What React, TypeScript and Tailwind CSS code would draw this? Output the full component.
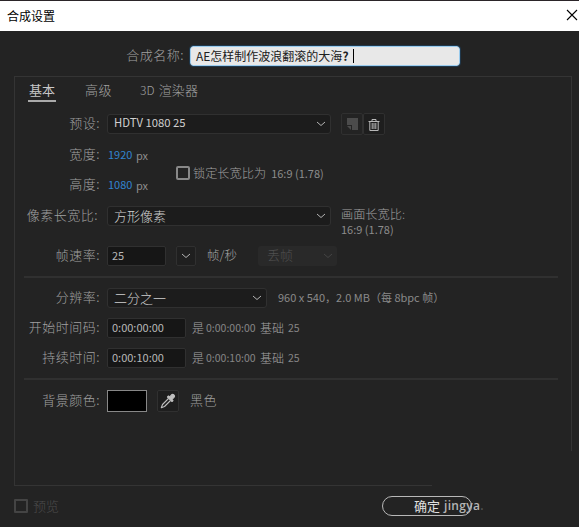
import type { ReactNode } from "react";

function Label({ children, className = "pr-px" }: { children: ReactNode; className?: string }) {
  return (
    <div className={`w-[86px] shrink-0 pb-[3px] whitespace-nowrap text-right text-[13px] tracking-[0.5px] text-[#a0a0a0] ${className}`}>
      {children}
    </div>
  );
}

function Chevron({ className = "text-[#b4b4b4]" }: { className?: string }) {
  return (
    <svg viewBox="0 0 10 6" className={`h-[6px] w-[10px] shrink-0 ${className}`} fill="none" stroke="currentColor" strokeWidth="1">
      <path d="M1 1 5 4.5 9 1" />
    </svg>
  );
}

function Select({ children, className = "" }: { children: ReactNode; className?: string }) {
  return (
    <div className={`flex h-5 shrink-0 items-center justify-between rounded-[3px] border border-[#303030] bg-[#1c1c1c] pr-1 pl-1.5 text-[#d0d0d0] ${className}`}>
      <span className="pb-[2px]">{children}</span>
      <Chevron />
    </div>
  );
}

function Field({ children, className = "" }: { children: ReactNode; className?: string }) {
  return (
    <div className={`flex h-5 shrink-0 items-center rounded-[2px] border border-[#303030] bg-[#161616] pb-px pl-1 text-[11px] font-normal text-[#b8b8b8] ${className}`}>
      {children}
    </div>
  );
}

function Row({ children, className = "" }: { children: ReactNode; className?: string }) {
  return <div className={`flex h-5 items-center ${className}`}>{children}</div>;
}

function TimeRow({ label, value, className }: { label: string; value: string; className: string }) {
  return (
    <Row className={className}>
      <Label>{label}</Label>
      <Field className="ml-1.5 w-[79px]">{value}</Field>
      <span className="ml-1.5 w-[14px] pb-px text-[12px] text-[#a4a4a4]">是</span>
      <span className="w-[54px] text-[10.5px] font-normal text-[#868686]">{value}</span>
      <span className="w-[28px] pb-px text-[12px] text-[#a4a4a4]">基础</span>
      <span className="text-[10.5px] font-normal text-[#868686]">25</span>
    </Row>
  );
}

export default function App() {
  return (
    <div className="relative flex h-[527px] w-[579px] flex-col overflow-hidden bg-[#232323] font-['Noto_Sans_CJK_SC',sans-serif] leading-none font-light whitespace-nowrap">
      <header className="flex h-[31px] shrink-0 items-center justify-between border-t border-[#2b2529] bg-white pl-[7px] text-[12px] font-normal text-black">
        <span className="pb-px">合成设置</span>
        <svg viewBox="0 0 12 12" className="mr-[1px] mb-[2px] h-3 w-3" fill="none" stroke="black" strokeWidth="1.1">
          <path d="m1 1 10 10M11 1 1 11" />
        </svg>
      </header>

      <div className="mt-[15px] flex h-5 shrink-0 items-center">
        <span className="w-[184px] pb-[3px] text-right text-[13px] tracking-[0.5px] text-[#a0a0a0]">合成名称:</span>
        <div className="ml-1.5 flex h-5 w-[270px] items-center rounded-[3px] border border-[#9acbed] bg-[#e8e8e8] pl-[5px] text-[12px] font-normal text-[#202020] outline outline-[#20384c]">
          <span className="pb-px">AE怎样制作波浪翻滚的大海<b className="font-bold">?</b></span>
          <i className="ml-[4px] h-[14px] w-px bg-black" />
        </div>
      </div>

      <main className="mt-[10px] ml-[14px] h-[410px] w-[558px] shrink-0 border border-[#343434]">
        <nav className="flex h-[25px] pt-1 pl-[13px] text-[13px] text-[#a0a0a0]">
          <span className="flex h-[21px] w-7 justify-center border-b-2 border-[#aaa] pt-[2px] font-normal text-[#c8c8c8]">基本</span>
          <span className="ml-[29px] pt-[2px] tracking-[0.5px]">高级</span>
          <span className="ml-[28px] pt-[2px] tracking-[0.1px]"><span className="mr-[1px] text-[12px]">3D</span> 渲染器</span>
        </nav>

        <Row className="mt-3">
          <Label>预设:</Label>
          <Select className="ml-1.5 w-[224px] text-[11.3px] font-normal">HDTV 1080 25</Select>
          <div className="ml-[10px] flex h-[22px] w-[22px] items-center justify-center rounded-[2px] border border-[#303030]">
            <svg viewBox="0 0 14 14" className="h-[14px] w-[14px]" fill="#4b4b4b">
              <path d="M2 1h11v12H7V8H2zM2 9h4v4z" />
            </svg>
          </div>
          <div className="flex h-[22px] w-[22px] items-center justify-center rounded-[2px] border border-[#303030] bg-[#1e1e1e]">
            <svg viewBox="0 0 12 14" className="mt-px h-[14px] w-3" fill="none" stroke="#b8b8b8" strokeWidth="1">
              <path d="M.5 3.5h11M4 3V1.5h4V3M1.8 3.5v9h8.4v-9M4.2 5v6M6 5v6M7.8 5v6" />
            </svg>
          </div>
        </Row>

        <div className="mt-[11px] flex h-[50px] items-center">
          <div className="flex w-[161px] flex-col">
            <Row>
              <Label>宽度:</Label>
              <span className="ml-[7px] w-[28px] pb-px text-[11px] font-normal text-[#3284ce]">1920</span>
              <span className="pt-px text-[11px] font-normal text-[#8c8c8c]">px</span>
            </Row>
            <Row className="mt-[10px]">
              <Label>高度:</Label>
              <span className="ml-[7px] w-[28px] pb-px text-[11px] font-normal text-[#3284ce]">1080</span>
              <span className="pt-px text-[11px] font-normal text-[#8c8c8c]">px</span>
            </Row>
          </div>
          <div className="mt-[6px] flex items-center text-[#a0a0a0]">
            <i className="mr-[3px] h-[14px] w-[14px] rounded-[2px] border-2 border-[#888]" />
            <span className="text-[12.2px]">锁定长宽比为</span>
            <span className="ml-[5px] text-[11px] font-normal text-[#8c8c8c]">16:9 (1.78)</span>
          </div>
        </div>

        <Row className="mt-[11px]">
          <Label className="pr-[3px]">像素长宽比:</Label>
          <Select className="ml-1.5 w-[224px] text-[13px]">方形像素</Select>
          <div className="ml-[10px] flex flex-col pt-[9px] text-[#a0a0a0]">
            <span className="text-[12.2px] leading-[16px]">画面长宽比:</span>
            <span className="text-[11px] leading-[14px] font-normal text-[#8c8c8c]">16:9 (1.78)</span>
          </div>
        </Row>

        <Row className="mt-5">
          <Label>帧速率:</Label>
          <Field className="ml-1.5 w-[59px]">25</Field>
          <div className="ml-[10px] flex h-5 w-5 items-center justify-center rounded-[2px] border border-[#303030] bg-[#1f1f1f]"><Chevron /></div>
          <span className="ml-[11px] w-[51px] pb-px text-[12.5px] text-[#a4a4a4]">帧/秒</span>
          <div className="flex h-5 w-[79px] items-center justify-between rounded-[3px] bg-[#292929] pr-[4px] pl-[9px] text-[13px] text-[#505050]">
            <span className="pb-[3px]">丢帧</span>
            <Chevron className="text-[#454545]" />
          </div>
        </Row>

        <hr className="mt-[10px] ml-[9px] w-[534px] border-t-2 border-[#303030]" />

        <Row className="mt-[10px]">
          <Label>分辨率:</Label>
          <Select className="ml-1.5 w-40 text-[13px]">二分之一</Select>
          <span className="ml-[11px] pb-[2px] text-[11px] font-normal text-[#8a8a8a]">960 x 540，2.0 MB（每 8bpc 帧）</span>
        </Row>
        <TimeRow className="mt-[10px]" label="开始时间码:" value="0:00:00:00" />
        <TimeRow className="mt-[10px]" label="持续时间:" value="0:00:10:00" />

        <hr className="mt-[10px] ml-[9px] w-[534px] border-t-2 border-[#303030]" />

        <Row className="mt-[11px]">
          <Label>背景颜色:</Label>
          <div className="ml-1.5 h-[22px] w-10 border border-[#888] bg-black" />
          <div className="ml-[10px] flex h-[22px] w-[22px] items-center justify-center rounded-[2px] border border-[#303030] bg-[#1e1e1e]">
            <svg viewBox="0 0 16 16" className="h-4 w-4" fill="none" stroke="#c0c0c0" strokeWidth="1.1" strokeLinejoin="round">
              <path d="m8.5 5.5-6 6-1.2 3.2 3.2-1.2 6-6" />
              <path d="m7.5 4 4.5 4.5 1-1-1-1.2 2.2-2.1c1.2-1.3-1.2-3.7-2.5-2.5L9.6 4 8.5 3z" fill="#c0c0c0" />
            </svg>
          </div>
          <span className="ml-[11px] pb-[4px] text-[13px] tracking-[0.5px] text-[#a0a0a0]">黑色</span>
        </Row>
      </main>

      <footer className="flex h-10 items-center pl-[14px]">
        <i className="h-[14px] w-[14px] rounded-[1px] border-2 border-[#444]" />
        <span className="ml-[5px] w-[349px] pb-[2px] text-[13px] text-[#4c4c4c]">预览</span>
        <div className="z-10 flex h-5 w-[90px] items-center rounded-full border border-[#b8b8b8] pl-[31px] text-[13px] font-normal text-[#e0e0e0]">
          <span className="mr-[4px] pb-[2px]">确定</span>
          <span className="font-['Open_Sans',sans-serif] text-[12px] font-semibold tracking-[0.3px] text-[#b5b5b5]">jingya<span className="text-[#555]">.</span></span>
        </div>
      </footer>
      <div className="absolute right-0 bottom-[38px] h-[38px] w-[147px] bg-[#232323]" />
    </div>
  );
}
